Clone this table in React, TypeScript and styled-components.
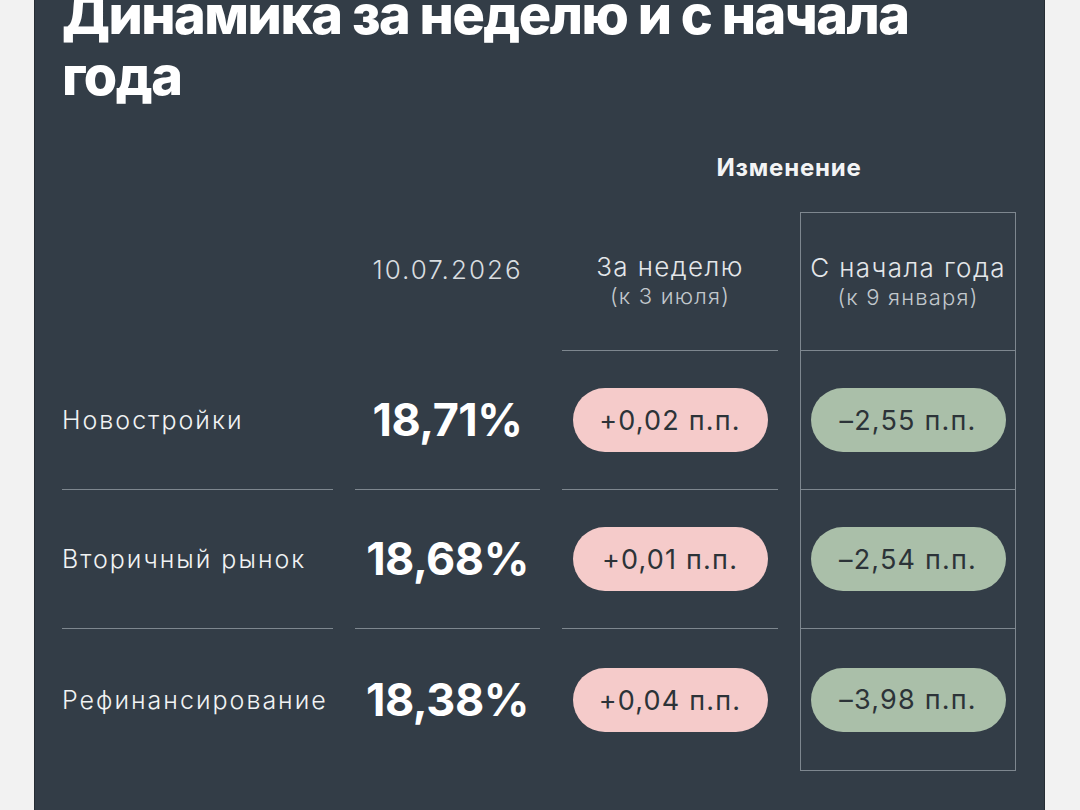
import React from "react";
import styled, { createGlobalStyle } from "styled-components";

const LINE = "#7e878f";

const Global = createGlobalStyle`
  html, body {
    margin: 0;
    padding: 0;
    background: #f2f2f2;
    overflow: hidden;
  }
  body {
    font-family: Inter, "Noto Sans", sans-serif;
  }
`;

const Page = styled.div`
  width: 1080px;
  height: 810px;
  overflow: hidden;
  display: flex;
  justify-content: flex-start;
`;

const Card = styled.section`
  margin: -16px 0 0 34px;
  width: 1011px;
  box-sizing: border-box;
  background: #333d47;
  border-left: 1px solid #262d34;
  border-right: 1px solid #262d34;
  padding: 0 29px 80px 27px;
  color: #f3f4f5;
`;

const Title = styled.h1`
  margin: 0;
  font-family: Inter, "Noto Sans", sans-serif;
  font-weight: 800;
  font-size: 54px;
  line-height: 61px;
  letter-spacing: -1.5px;
  color: #ffffff;
`;

const Table = styled.div`
  display: grid;
  grid-template-columns: 271px 185px 216px 216px;
  column-gap: 22px;
  margin-top: 47px;
`;

const GroupHead = styled.div`
  grid-column: 3 / 5;
  text-align: center;
  font-weight: 700;
  font-size: 24px;
  line-height: 30px;
  letter-spacing: 0.8px;
  color: #f3f4f5;
  padding-bottom: 29px;
`;

const Cell = styled.div<{
  $h: number;
  $top?: boolean;
  $bottom?: boolean;
  $sides?: boolean;
  $justify?: string;
  $pb?: number;
}>`
  box-sizing: border-box;
  height: ${(p) => p.$h}px;
  display: flex;
  flex-direction: column;
  align-items: ${(p) => p.$justify ?? "center"};
  justify-content: center;
  padding-bottom: ${(p) => p.$pb ?? 0}px;
  border-top: ${(p) => (p.$top ? `1px solid ${LINE}` : "none")};
  border-bottom: ${(p) => (p.$bottom ? `1px solid ${LINE}` : "none")};
  border-left: ${(p) => (p.$sides ? `1px solid ${LINE}` : "none")};
  border-right: ${(p) => (p.$sides ? `1px solid ${LINE}` : "none")};
`;

const DateText = styled.div`
  font-weight: 300;
  font-size: 26px;
  line-height: 30px;
  letter-spacing: 2px;
  color: #d9dde0;
`;

const HeadMain = styled.div`
  font-weight: 300;
  font-size: 26px;
  line-height: 30px;
  letter-spacing: 1.4px;
  color: #e4e7ea;
`;

const HeadSub = styled.div`
  font-weight: 300;
  font-size: 22px;
  line-height: 28px;
  letter-spacing: 1.2px;
  color: #c2c8cd;
`;

const Label = styled.div`
  font-weight: 300;
  font-size: 25px;
  line-height: 30px;
  color: #f1f3f4;
  letter-spacing: 2px;
`;

const Value = styled.div`
  font-weight: 700;
  font-size: 45px;
  line-height: 50px;
  color: #ffffff;
  letter-spacing: -0.5px;
`;

const Pill = styled.div<{ $tone: "up" | "down" }>`
  width: 195px;
  height: 64px;
  border-radius: 32px;
  display: flex;
  align-items: center;
  justify-content: center;
  background: ${(p) => (p.$tone === "up" ? "#f5cbca" : "#aabfa9")};
  color: #2c3338;
  font-weight: 400;
  font-size: 27px;
  letter-spacing: 1.2px;
`;

const rows = [
  { label: "Новостройки", value: "18,71%", week: "+0,02 п.п.", ytd: "–2,55 п.п." },
  { label: "Вторичный рынок", value: "18,68%", week: "+0,01 п.п.", ytd: "–2,54 п.п." },
  { label: "Рефинансирование", value: "18,38%", week: "+0,04 п.п.", ytd: "–3,98 п.п." },
];

export default function App() {
  return (
    <>
      <Global />
      <Page>
        <Card>
          <Title>
            Динамика за неделю и с начала
            <br />
            года
          </Title>
          <Table>
            <GroupHead>Изменение</GroupHead>

            <Cell $h={139} />
            <Cell $h={139} $pb={24}>
              <DateText>10.07.2026</DateText>
            </Cell>
            <Cell $h={139} $bottom>
              <HeadMain>За неделю</HeadMain>
              <HeadSub>(к 3 июля)</HeadSub>
            </Cell>
            <Cell $h={139} $top $sides $bottom>
              <HeadMain>С начала года</HeadMain>
              <HeadSub>(к 9 января)</HeadSub>
            </Cell>

            {rows.map((r, i) => {
              const last = i === rows.length - 1;
              const h = last ? 142 : 139;
              return (
                <React.Fragment key={r.label}>
                  <Cell $h={h} $bottom={!last} $justify="flex-start">
                    <Label>{r.label}</Label>
                  </Cell>
                  <Cell $h={h} $bottom={!last}>
                    <Value>{r.value}</Value>
                  </Cell>
                  <Cell $h={h} $bottom={!last}>
                    <Pill $tone="up">{r.week}</Pill>
                  </Cell>
                  <Cell $h={h} $bottom $sides>
                    <Pill $tone="down">{r.ytd}</Pill>
                  </Cell>
                </React.Fragment>
              );
            })}
          </Table>
        </Card>
      </Page>
    </>
  );
}
